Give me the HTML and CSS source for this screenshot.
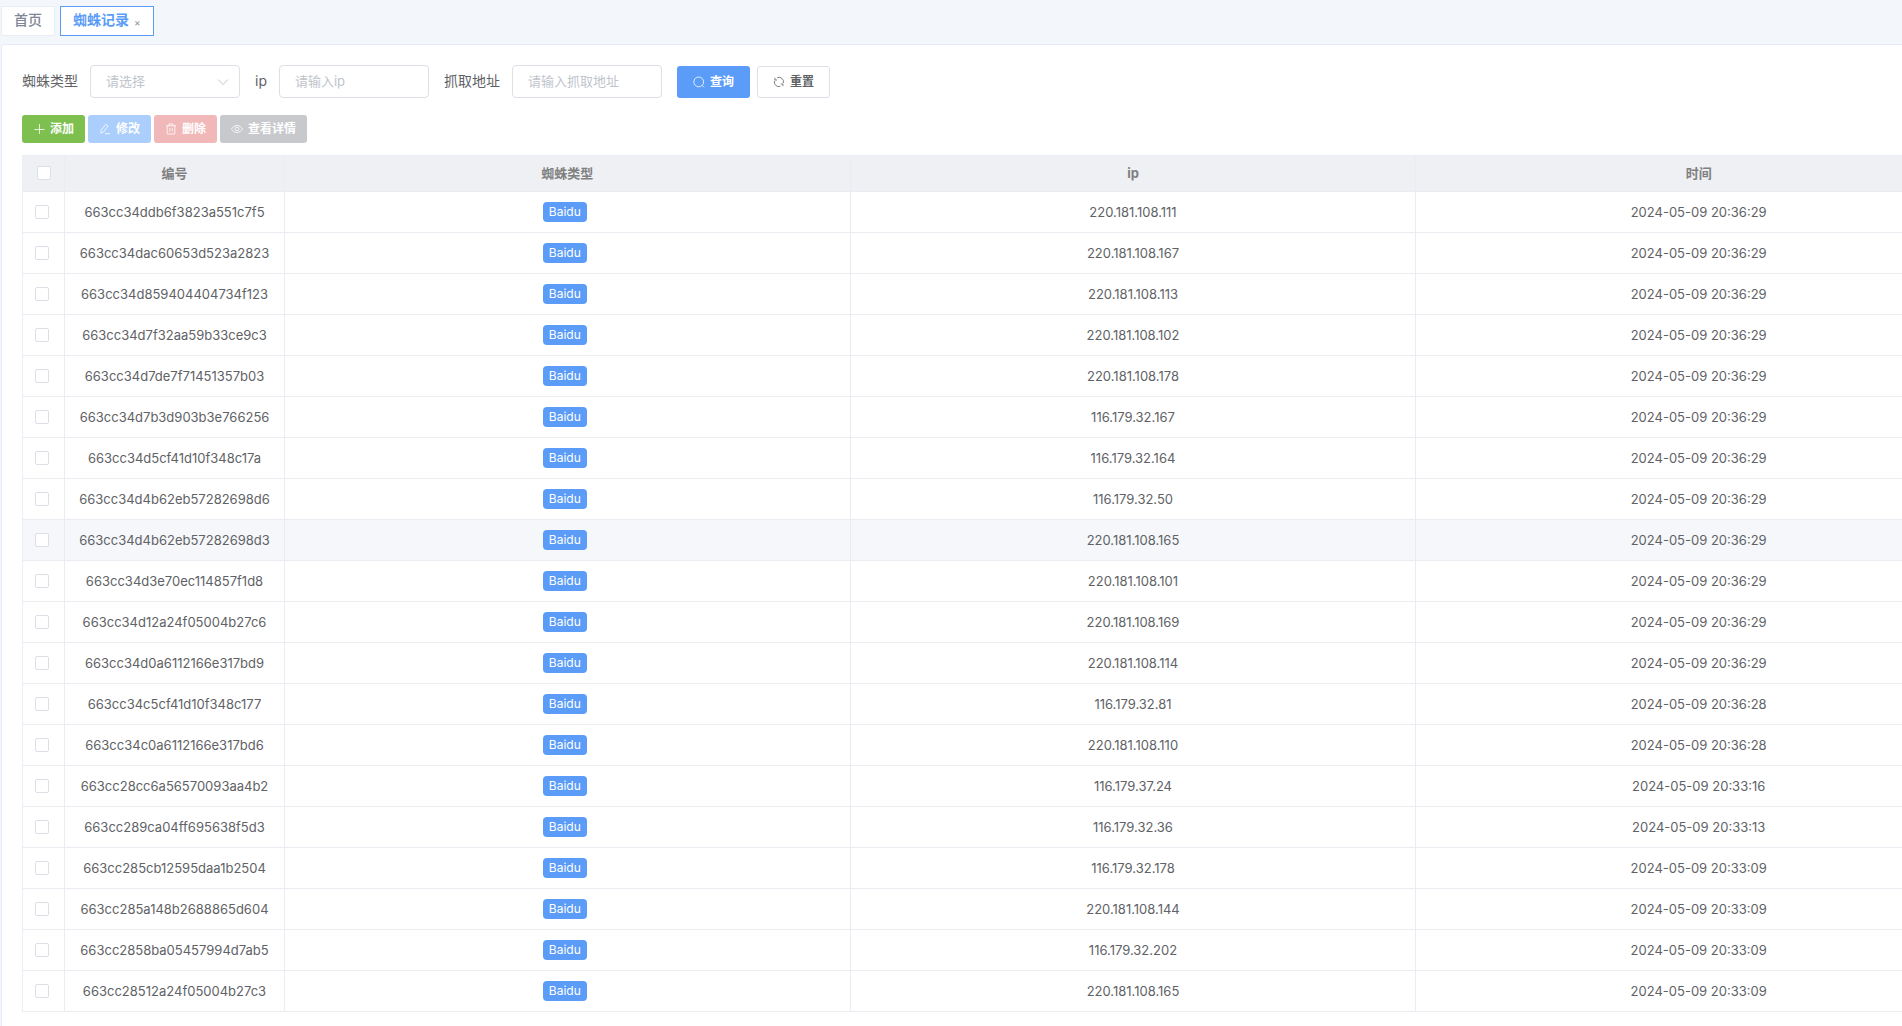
FILE: index.html
```html
<!DOCTYPE html>
<html lang="zh-CN">
<head>
<meta charset="utf-8">
<title>蜘蛛记录</title>
<link rel="stylesheet" href="styles.css">
</head>
<body>
<nav class="tabs">
  <a class="tab" href="#home">首页</a>
  <a class="tab tab-active" href="#spider">蜘蛛记录<span class="tab-close">×</span></a>
</nav>
<main class="card">
  <form class="filters">
    <div class="field">
      <label for="type">蜘蛛类型</label>
      <div class="select">
        <select id="type" class="control"><option>请选择</option></select>
        <svg class="chevron" viewBox="0 0 12 12"><path d="M1 3.5l5 5 5-5"/></svg>
      </div>
    </div>
    <div class="field">
      <label for="ip">ip</label>
      <input id="ip" class="control" type="text" placeholder="请输入ip">
    </div>
    <div class="field">
      <label for="url">抓取地址</label>
      <input id="url" class="control" type="text" placeholder="请输入抓取地址">
    </div>
    <div class="filter-actions">
      <button type="button" class="btn btn-large btn-primary"><svg viewBox="0 0 12 12"><circle cx="5.7" cy="5.9" r="4.9"/><path d="M9.2 9.4l1.900 1.900"/></svg>查询</button>
      <button type="reset" class="btn btn-large btn-plain"><svg viewBox="0 0 12 12"><path d="M4.200 1.700A4.500 4.500 0 0 1 10.300 7.200M7.400 10.300A4.500 4.500 0 0 1 1.500 4.800M1.900 1.800v2.200h2.200M9.900 10.200V8H7.700"/></svg>重置</button>
    </div>
  </form>
  <div class="toolbar">
    <button type="button" class="btn btn-success"><svg viewBox="0 0 12 12"><path d="M6.500 1v10M1.500 6.500h10"/></svg>添加</button>
    <button type="button" class="btn btn-edit" disabled><svg viewBox="0 0 12 12"><path d="M2.200 7.200L6.800 1.300l2.300 1.800L4.500 9l-2.700 1.300zM6 10.700h5"/></svg>修改</button>
    <button type="button" class="btn btn-delete" disabled><svg viewBox="0 0 12 12"><path d="M1 2.800h10M4 2.800V1h4v1.800M2.200 2.800V11h7.600V2.800M4.800 5v3.600M7.200 5v3.600"/></svg>删除</button>
    <button type="button" class="btn btn-info" disabled><svg viewBox="0 0 12 12"><path d="M.5 6C3 1.300 9 1.300 11.500 6 9 10.700 3 10.700.5 6z"/><circle cx="6" cy="6" r="1.900"/></svg>查看详情</button>
  </div>
  <div class="table-wrap">
  <table class="records">
    <colgroup><col class="col-check"><col class="col-id"><col><col><col></colgroup>
    <thead>
      <tr><th><input type="checkbox" aria-label="全选"></th><th>编号</th><th>蜘蛛类型</th><th>ip</th><th>时间</th></tr>
    </thead>
    <tbody>
      <tr><td><input type="checkbox" aria-label="选择"></td><td>663cc34ddb6f3823a551c7f5</td><td><span class="tag">Baidu</span></td><td>220.181.108.111</td><td>2024-05-09 20:36:29</td></tr>
      <tr><td><input type="checkbox" aria-label="选择"></td><td>663cc34dac60653d523a2823</td><td><span class="tag">Baidu</span></td><td>220.181.108.167</td><td>2024-05-09 20:36:29</td></tr>
      <tr><td><input type="checkbox" aria-label="选择"></td><td>663cc34d859404404734f123</td><td><span class="tag">Baidu</span></td><td>220.181.108.113</td><td>2024-05-09 20:36:29</td></tr>
      <tr><td><input type="checkbox" aria-label="选择"></td><td>663cc34d7f32aa59b33ce9c3</td><td><span class="tag">Baidu</span></td><td>220.181.108.102</td><td>2024-05-09 20:36:29</td></tr>
      <tr><td><input type="checkbox" aria-label="选择"></td><td>663cc34d7de7f71451357b03</td><td><span class="tag">Baidu</span></td><td>220.181.108.178</td><td>2024-05-09 20:36:29</td></tr>
      <tr><td><input type="checkbox" aria-label="选择"></td><td>663cc34d7b3d903b3e766256</td><td><span class="tag">Baidu</span></td><td>116.179.32.167</td><td>2024-05-09 20:36:29</td></tr>
      <tr><td><input type="checkbox" aria-label="选择"></td><td>663cc34d5cf41d10f348c17a</td><td><span class="tag">Baidu</span></td><td>116.179.32.164</td><td>2024-05-09 20:36:29</td></tr>
      <tr><td><input type="checkbox" aria-label="选择"></td><td>663cc34d4b62eb57282698d6</td><td><span class="tag">Baidu</span></td><td>116.179.32.50</td><td>2024-05-09 20:36:29</td></tr>
      <tr class="row-hover"><td><input type="checkbox" aria-label="选择"></td><td>663cc34d4b62eb57282698d3</td><td><span class="tag">Baidu</span></td><td>220.181.108.165</td><td>2024-05-09 20:36:29</td></tr>
      <tr><td><input type="checkbox" aria-label="选择"></td><td>663cc34d3e70ec114857f1d8</td><td><span class="tag">Baidu</span></td><td>220.181.108.101</td><td>2024-05-09 20:36:29</td></tr>
      <tr><td><input type="checkbox" aria-label="选择"></td><td>663cc34d12a24f05004b27c6</td><td><span class="tag">Baidu</span></td><td>220.181.108.169</td><td>2024-05-09 20:36:29</td></tr>
      <tr><td><input type="checkbox" aria-label="选择"></td><td>663cc34d0a6112166e317bd9</td><td><span class="tag">Baidu</span></td><td>220.181.108.114</td><td>2024-05-09 20:36:29</td></tr>
      <tr><td><input type="checkbox" aria-label="选择"></td><td>663cc34c5cf41d10f348c177</td><td><span class="tag">Baidu</span></td><td>116.179.32.81</td><td>2024-05-09 20:36:28</td></tr>
      <tr><td><input type="checkbox" aria-label="选择"></td><td>663cc34c0a6112166e317bd6</td><td><span class="tag">Baidu</span></td><td>220.181.108.110</td><td>2024-05-09 20:36:28</td></tr>
      <tr><td><input type="checkbox" aria-label="选择"></td><td>663cc28cc6a56570093aa4b2</td><td><span class="tag">Baidu</span></td><td>116.179.37.24</td><td>2024-05-09 20:33:16</td></tr>
      <tr><td><input type="checkbox" aria-label="选择"></td><td>663cc289ca04ff695638f5d3</td><td><span class="tag">Baidu</span></td><td>116.179.32.36</td><td>2024-05-09 20:33:13</td></tr>
      <tr><td><input type="checkbox" aria-label="选择"></td><td>663cc285cb12595daa1b2504</td><td><span class="tag">Baidu</span></td><td>116.179.32.178</td><td>2024-05-09 20:33:09</td></tr>
      <tr><td><input type="checkbox" aria-label="选择"></td><td>663cc285a148b2688865d604</td><td><span class="tag">Baidu</span></td><td>220.181.108.144</td><td>2024-05-09 20:33:09</td></tr>
      <tr><td><input type="checkbox" aria-label="选择"></td><td>663cc2858ba05457994d7ab5</td><td><span class="tag">Baidu</span></td><td>116.179.32.202</td><td>2024-05-09 20:33:09</td></tr>
      <tr><td><input type="checkbox" aria-label="选择"></td><td>663cc28512a24f05004b27c3</td><td><span class="tag">Baidu</span></td><td>220.181.108.165</td><td>2024-05-09 20:33:09</td></tr>
    </tbody>
  </table>
  </div>
</main>
</body>
</html>
```
FILE: styles.css
```css
* { box-sizing: border-box; }

body {
  margin: 0;
  min-height: 100vh;
  display: flex;
  flex-direction: column;
  background: #f3f6fb;
  color: #606266;
  font: 14px/20px Inter, "Noto Sans CJK SC", sans-serif;
}

.tabs {
  display: flex;
  gap: 5px;
  padding: 6px 1px 8px;
}

.tab {
  display: flex;
  align-items: center;
  height: 30px;
  padding: 0 12px 2px;
  border: 1px solid #e9edf4;
  background: #fff;
  color: #808695;
  font-weight: 500;
  text-decoration: none;
}

.tab-active {
  border-color: #5b9cf8;
  color: #5b9cf8;
  font-weight: 700;
}

.tab-close {
  margin: 3px 0 0 5px;
  color: #909399;
  font-size: 10px;
  font-weight: 400;
}

.card {
  flex: 1;
  margin-left: 1px;
  padding: 20px 0 14px 20px;
  border: 1px solid #e6ebf5;
  border-width: 1px 0 0 1px;
  border-radius: 4px 0 0 0;
  background: #fff;
  overflow: hidden;
}

.filters {
  display: flex;
  align-items: center;
  gap: 15px;
}

.field {
  display: flex;
  align-items: center;
  gap: 12px;
}

.field label { padding-bottom: 2px; }

.select { position: relative; }

.control {
  display: block;
  width: 150px;
  height: 33px;
  padding: 0 15px 2px;
  border: 1px solid #dcdfe6;
  border-radius: 4px;
  background: #fff;
  color: #c0c4cc;
  font: inherit;
  font-size: 13px;
  appearance: none;
}

.control::placeholder { color: #c0c4cc; }

.chevron {
  position: absolute;
  top: 11px;
  right: 11px;
  width: 12px;
  height: 12px;
  fill: none;
  stroke: #c0c4cc;
  pointer-events: none;
}

.filter-actions {
  display: flex;
  gap: 7px;
}

.btn {
  display: flex;
  align-items: center;
  justify-content: center;
  gap: 5px;
  height: 28px;
  padding: 0 10px;
  border: 1px solid transparent;
  border-radius: 3px;
  color: #fff;
  font: 700 12px/16px Inter, "Noto Sans CJK SC", sans-serif;
}

.btn svg {
  width: 12px;
  height: 12px;
  fill: none;
  stroke: currentColor;
  stroke-width: 0.8;
}

.btn-large {
  height: 32px;
  padding: 0 15px;
}

.btn-primary { background: #5b9cf8; }
.btn-plain { border-color: #dcdfe6; background: #fff; color: #606266; }
.btn-success { background: #7ec050; }
.btn-edit { background: #abcefc; }
.btn-delete { background: #f0b8b8; }
.btn-info { background: #c8c9cc; }

.toolbar {
  display: flex;
  gap: 3px;
  margin: 17px 0 12px;
}

.table-wrap { overflow: hidden; }

.records {
  width: 100%;
  min-width: 1960px;
  table-layout: fixed;
  border-collapse: separate;
  border-spacing: 0;
  border: 1px solid #ebeef5;
  border-width: 1px 0 0 1px;
  font-size: 13px;
  text-align: center;
}

.col-check { width: 42px; }
.col-id { width: 220px; }

.records th,
.records td {
  height: 41px;
  padding: 0;
  border: 1px solid #ebecf2;
  border-width: 0 1px 1px 0;
}

.records th {
  height: 36px;
  padding-bottom: 2px;
  background: #eef0f4;
  color: #808080;
  font-weight: 700;
}

.records td:first-child { padding-right: 4px; }

.records input {
  display: block;
  width: 14px;
  height: 14px;
  margin: 0 auto;
  border: 1px solid #dcdfe6;
  border-radius: 2px;
  background: #fff;
  appearance: none;
}

.row-hover { background: #f5f7fa; }

.tag {
  display: block;
  width: fit-content;
  margin: 0 auto;
  border-right: 0;
  padding: 0 6px;
  border-radius: 4px;
  background: #5b9cf8;
  color: #fff;
  font-size: 12px;
  line-height: 20px;
}

.records td:nth-child(3) { padding-right: 5px; }
```
